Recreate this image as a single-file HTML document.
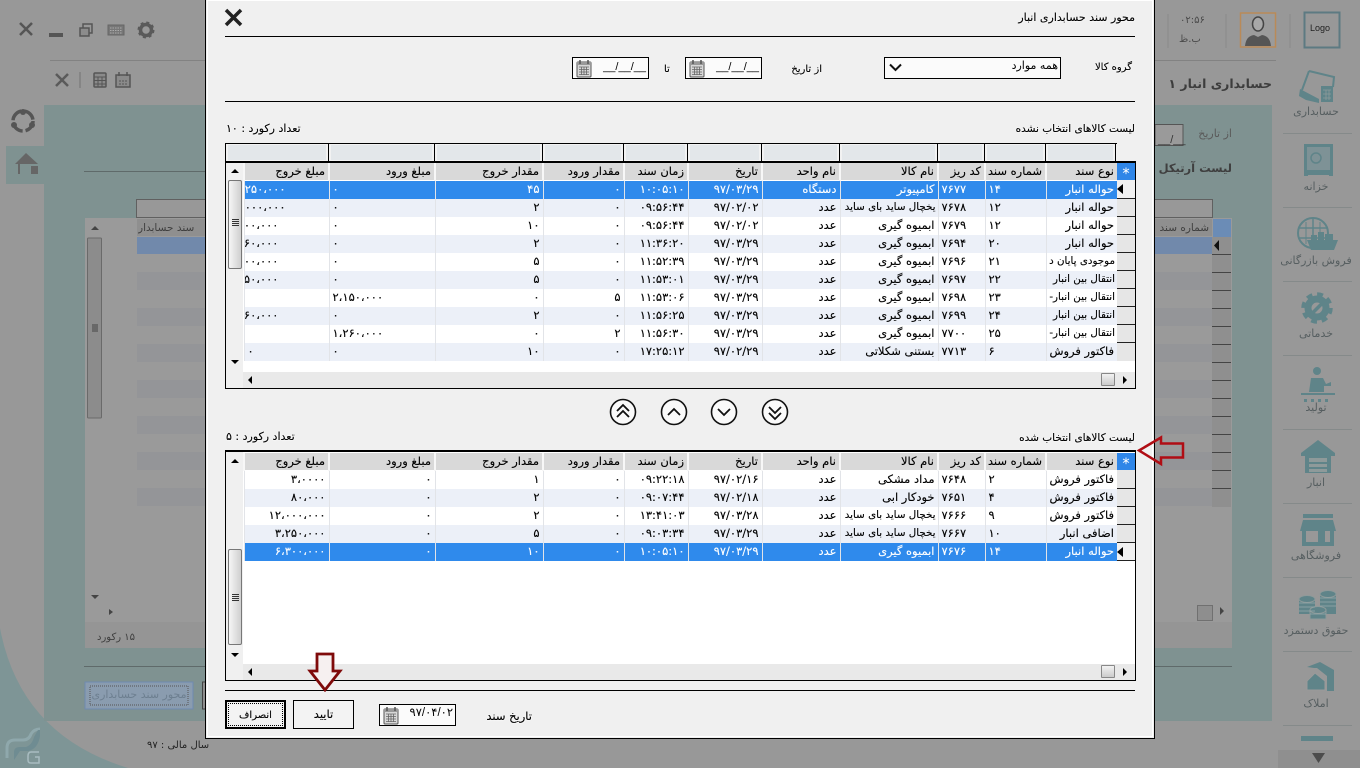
<!DOCTYPE html>
<html lang="fa">
<head>
<meta charset="utf-8">
<title>محور سند حسابداری انبار</title>
<style>
html,body{margin:0;padding:0;width:1360px;height:768px;overflow:hidden;background:#989898;}
body{position:relative;font-family:"DejaVu Sans","Liberation Sans",sans-serif;font-size:10px;color:#000;}
.a{position:absolute;box-sizing:border-box;}
.t{position:absolute;white-space:nowrap;direction:rtl;line-height:14px;}
.bgt{color:#3f3f3f;}
.side{color:#565e60;font-size:11px;width:88px;left:1272px;text-align:center;}
#dlg{left:205px;top:-2px;width:950px;height:741px;background:#f0f0f0;border:1.5px solid #000;outline:1px solid #fff;outline-offset:-3px;}
.hl{position:absolute;left:225px;width:910px;height:1px;background:#000;}
.lab{text-shadow:0 0 2px #fff,0 0 2px #fff;-webkit-text-stroke:.12px #000;}
.date{position:absolute;height:22px;width:77px;border:1px solid #000;background:#fbfbfb;box-sizing:border-box;}
.date svg{position:absolute;left:3px;top:1px;}
.mask{position:absolute;right:2px;top:3px;font:11px "Liberation Sans","DejaVu Sans",sans-serif;line-height:12px;}
.grid{position:absolute;left:225px;width:911px;background:#fff;border:1px solid #000;box-sizing:border-box;}
table{position:absolute;border-collapse:collapse;table-layout:fixed;direction:rtl;width:891px;}
td,th{padding:0 3px;overflow:hidden;white-space:nowrap;height:18px;line-height:16px;font-size:11.5px;font-weight:normal;text-align:right;box-sizing:border-box;border-left:1px solid #e2e4e8;-webkit-text-stroke:.12px currentColor;}
td{padding-bottom:2px;}
th{height:17px;background:#d9d9d9;border-left:2px solid #f7f7f7;border-bottom:1px solid #fff;}
th.st{background:#2f86e8;color:#fff;border:0;font-size:14px;line-height:12px;text-align:center;padding:5px 0 0;}
tr:nth-child(odd) td{background:#ecf0f8;}
tr.s td{background:#2f8aec;color:#fff;}
td.i,tr:nth-child(odd) td.i{background:#e6e6e6;border-left:0;border-bottom:1px solid #222;padding:0;text-align:left;}
tr.s td.i{background:#f0f0f0;}
td.l{text-align:left;direction:ltr;}
td.m{padding-right:43px;}
td.n{font-size:10.300px;padding-right:2px;}
.cur{display:inline-block;width:0;height:0;border:5px solid transparent;border-left:0;border-right:6px solid #000;margin-top:3px;margin-left:0;vertical-align:top;}
.flt{position:absolute;top:0;height:18px;background:#e3e7ea;border-left:1px solid #000;box-sizing:border-box;background-clip:content-box;padding:1px 2px 2px 2px;}
.thumb{position:absolute;left:2px;width:14px;border:1px solid #777;border-radius:2px;background:linear-gradient(90deg,#f6f6f6,#cfcfcf);box-sizing:border-box;}
.grip{position:absolute;left:3px;width:7px;height:1px;background:#333;box-shadow:0 2px 0 #333,0 4px 0 #333,0 6px 0 #333;}
.up,.dn,.lf,.rt{position:absolute;width:0;height:0;border:4px solid transparent;}
.up{border-top:0;border-bottom:4px solid #000;}
.dn{border-bottom:0;border-top:4px solid #000;}
.lf{border-left:0;border-right:4px solid #000;}
.rt{border-right:0;border-left:4px solid #000;}
.hsb{position:absolute;left:17px;height:16px;width:892px;background:#e9e9e9;}
.vsb{position:absolute;left:0;top:0;width:17px;background:#f0f0f0;}
.hth{position:absolute;left:858px;top:1px;width:14px;height:13px;border:1px solid #888;background:linear-gradient(#f2f2f2,#cbcbcb);box-sizing:border-box;border-radius:1px;}
.btn{position:absolute;top:700px;height:29px;width:61px;background:#f3f3f3;text-align:center;line-height:27px;box-sizing:border-box;direction:rtl;-webkit-text-stroke:.12px #000;}
</style>
</head>
<body>
<svg width="0" height="0" style="position:absolute"><defs>
<g id="cal"><rect x="1" y="3" width="14" height="15" rx="1" fill="#d8d8d8" stroke="#555"/><rect x="1" y="3" width="14" height="3" fill="#999"/><path d="M4 1v4M12 1v4" stroke="#555" stroke-width="1.5"/><path d="M3 8h10M3 10.500h10M3 13h10M3 15.500h10M5.500 8v8M8 8v8M10.500 8v8" stroke="#666" stroke-width=".8"/></g>
</defs></svg>

<!-- background -->
<svg class="a" style="left:0;top:0" width="1360" height="768">
<path d="M0 628Q20 735 128 768H0Z" fill="#7e9596"/>
<rect x="44" y="105" width="1228" height="616" fill="#7f9291"/>
<rect x="6" y="146" width="38" height="38" fill="#7f9291"/>
<rect x="50" y="60" width="1226" height="1" fill="#828282"/>
<rect x="84" y="171" width="122" height="1" fill="#5f6a6a"/>
<rect x="84" y="666" width="1148" height="1" fill="#5f6a6a"/>
<rect x="85" y="218" width="1147" height="404" fill="#9a9a9a"/>
<rect x="85" y="622" width="1147" height="26" fill="#959595"/>
<rect x="137" y="237" width="1076" height="17" fill="#7189ab"/>
<rect x="137" y="272" width="1076" height="18" fill="#949598"/><rect x="137" y="308" width="1076" height="18" fill="#949598"/><rect x="137" y="344" width="1076" height="18" fill="#949598"/><rect x="137" y="380" width="1076" height="18" fill="#949598"/><rect x="137" y="416" width="1076" height="18" fill="#949598"/><rect x="137" y="452" width="1076" height="18" fill="#949598"/><rect x="137" y="488" width="1076" height="18" fill="#949598"/>
<rect x="136.500" y="199.500" width="1076" height="18" fill="#989898" stroke="#606060"/>
<rect x="137" y="219" width="1075" height="17" fill="#8f8f8f"/>
<rect x="1213" y="219" width="18" height="18" fill="#6b8cb6"/>
<rect x="1212" y="237" width="19" height="270" fill="#8f8f8f"/>
<path d="M1212 254.500h19M1212 272.500h19M1212 290.500h19M1212 308.500h19M1212 326.500h19M1212 344.500h19M1212 362.500h19M1212 380.500h19M1212 398.500h19M1212 416.500h19M1212 434.500h19M1212 452.500h19M1212 470.500h19M1212 488.500h19" stroke="#444"/>
<path d="M1219 240v11l-5-5.500z" fill="#111"/>
<rect x="87.500" y="238" width="14" height="180" rx="1" fill="#8c8c8c" stroke="#6a6a6a"/>
<path d="M92 325h6M92 327h6M92 329h6M92 331h6" stroke="#444"/>
<path d="M91 230l4-4 4 4zM91 595l4 4 4-4zM113 612l-4-3v6zM1220 607l4 4-4 4z" fill="#444"/>
<rect x="1197.500" y="605.500" width="15" height="15" fill="#8e8e8e" stroke="#707070"/>
<rect x="1155" y="124.500" width="28" height="21" fill="#9a9a9a" stroke="#555"/>
<rect x="85" y="682" width="108" height="27" fill="#8a9caf" stroke="#6f8ab0"/>
<rect x="90" y="686" width="98" height="19" fill="none" stroke="#555" stroke-dasharray="1 1"/>
<rect x="202.500" y="682" width="4" height="27" fill="#8e8e8e" stroke="#444"/>
<path d="M1168 14v34M1226 14v34M1290 14v34" stroke="#8a8a8a"/>
<!-- window controls -->
<path d="M20 23L32 35M32 23L20 35" stroke="#555" stroke-width="2.500"/>
<rect x="49" y="33" width="14" height="4" fill="#555"/>
<path d="M83 24h9v9h-9z" fill="none" stroke="#555" stroke-width="1.500"/>
<path d="M80 28h9v8h-9z" fill="#8c8c8c" stroke="#555" stroke-width="1.500"/>
<rect x="108" y="25" width="16" height="10" fill="#777" stroke="#666"/>
<path d="M110 28h12M110 30.500h12M110 33h12" stroke="#aaa" stroke-dasharray="1.500 1"/>
<circle cx="146" cy="30" r="5.500" fill="none" stroke="#5a5a5a" stroke-width="3.500"/>
<circle cx="146" cy="30" r="7.500" fill="none" stroke="#5a5a5a" stroke-width="2" stroke-dasharray="3 2.900"/>
<path d="M56 74L68 86M68 74L56 86" stroke="#5a5a5a" stroke-width="2.500"/>
<rect x="79" y="72" width="2" height="16" fill="#858585"/>
<rect x="94" y="73" width="12" height="14" rx="1" fill="#8a8a8a" stroke="#555" stroke-width="1.500"/>
<path d="M94 77h12M94 80.500h12M94 84h12M98 77v10M102 77v10" stroke="#555"/>
<rect x="116" y="75" width="14" height="12" fill="#8a8a8a" stroke="#555" stroke-width="1.500"/>
<path d="M119 72v4M127 72v4" stroke="#555" stroke-width="1.500"/>
<path d="M119 81h2M122 81h2M125 81h2M119 84h2M122 84h2M125 84h2" stroke="#555"/>
<!-- left icons -->
<circle cx="23" cy="121" r="10" fill="none" stroke="#555" stroke-width="3.500" stroke-dasharray="13 3"/>
<circle cx="23" cy="112" r="3" fill="#555"/><circle cx="14" cy="125" r="3" fill="#555"/><circle cx="32" cy="125" r="3" fill="#555"/>
<path d="M15 164l11-11 12 11z" fill="#666"/><rect x="18" y="164" width="2" height="10" fill="#666"/><rect x="31" y="166" width="7" height="8" fill="#666"/>
<!-- logo -->
<rect x="1304.500" y="12.500" width="35" height="35" fill="none" stroke="#5d7a82" stroke-width="2"/>
<rect x="1240.500" y="13" width="35" height="34" fill="#9b9b9b" stroke="#b98a58" stroke-width="1.500"/>
<ellipse cx="1258" cy="24" rx="5.500" ry="7" fill="#a8a8a8" stroke="#444" stroke-width="1.500"/>
<path d="M1245 46q1-10 9-11l4 2 4-2q8 1 9 11z" fill="#555"/>
<!-- sidebar icons -->
<g fill="#5f8489">
<path d="M1309 71l25 6-1 10M1309 71l-7 19" fill="none" stroke="#5f8489" stroke-width="2"/>
<path d="M1300 89l19 10v4l-13-3-7-4z"/>
<rect x="1321" y="86" width="12" height="16"/>
<path d="M1323 90h8M1323 94h8M1323 98h8M1326 90v10M1329 90v10" stroke="#8e9a9a" stroke-width=".8"/>
<rect x="1304" y="144" width="29" height="29"/><rect x="1307" y="147" width="23" height="23" fill="#7e9296"/><path d="M1304 173h29v3h-4v-1h-21v1h-4z"/>
<circle cx="1316" cy="158" r="5" fill="none" stroke="#5f8489" stroke-width="1.500"/>
<circle cx="1313" cy="233" r="15" fill="none" stroke="#5f8489" stroke-width="2"/>
<path d="M1299 228h28M1299 238h28M1313 218v30" stroke="#5f8489" stroke-width="1.500"/>
<path d="M1306 222v22M1320 222v22" stroke="#5f8489"/>
<path d="M1307 240h31l-4 10h-23z"/><rect x="1311" y="235" width="6" height="6"/><rect x="1318" y="232" width="6" height="9"/><rect x="1325" y="234" width="8" height="7"/>
<circle cx="1317" cy="308" r="9" fill="none" stroke="#5f8489" stroke-width="7"/>
<circle cx="1317" cy="308" r="14" fill="none" stroke="#5f8489" stroke-width="3.500" stroke-dasharray="6 5"/>
<path d="M1312 311l8-8 3 2-9 9z"/>
<circle cx="1317" cy="371" r="4"/><path d="M1309 392l2-14h12l3 6 5-2v4h-7v6z"/><path d="M1301 393h34v2h-34z"/><path d="M1304 399h3v3h-3zM1311 399h3v3h-3zM1318 399h3v3h-3zM1325 399h3v3h-3z"/>
<path d="M1318 440l17 13v3h-34v-3z"/><rect x="1305" y="456" width="26" height="17"/>
<rect x="1309" y="458" width="18" height="4" fill="#8e9a9a"/><rect x="1309" y="464" width="18" height="3" fill="#8e9a9a"/><rect x="1309" y="469" width="18" height="3" fill="#8e9a9a"/>
<rect x="1303" y="514" width="30" height="4"/><path d="M1303 520h30l3 11h-36z"/><path d="M1302 531h4v15h-4zM1330 531h4v15h-4zM1306 542h24v4h-24z"/><rect x="1318" y="531" width="7" height="14"/>
<rect x="1299" y="599" width="16" height="15"/><rect x="1320" y="594" width="16" height="20"/><ellipse cx="1307" cy="599" rx="8" ry="3.500" stroke="#8e9a9a"/><ellipse cx="1328" cy="594" rx="8" ry="3.500" stroke="#8e9a9a"/>
<rect x="1310" y="610" width="16" height="9" stroke="#8e9a9a"/><ellipse cx="1318" cy="610" rx="8" ry="3.500" stroke="#8e9a9a"/>
<path d="M1320 662l14 8v21h-7v-15l-10-8h-3l-7-1z"/><path d="M1315 673l10 8v9h-18v-9z" stroke="#9a9a9a"/>
<rect x="1301" y="736" width="32" height="5"/>
</g>
<path d="M1299 603h16M1299 607h16M1299 611h16M1320 598h16M1320 602h16M1320 606h16M1310 614h16" stroke="#9aa" stroke-width=".8"/>
<path d="M1283 133.500h69M1283 207.500h69M1283 281.500h69M1283 355.500h69M1283 429.500h69M1283 503.500h69M1283 577.500h69M1283 651.500h69M1283 725.500h69" stroke="#858a8a"/>
<rect x="1278" y="750" width="82" height="18" fill="#8f8f8f"/>
<path d="M1312 753h13l-6.500 10z" fill="#4c4c4c"/>
<!-- G logo -->
<path d="M7 748q0-8 8-8h8q6 0 8-6 3-5 9-5M7 748v10" fill="none" stroke="#8fa8ac" stroke-width="3"/>
<path d="M14 760v-8q0-5 6-5h6q6-2 8-10l4-7h2v6q-2 13-12 15h-8" fill="#6f8c92"/>
<path d="M39 752H31q-3 0-3 4v4q0 3 3 3h8v-6h-4" fill="none" stroke="#a8bcc0" stroke-width="1.500"/>
</svg>

<div class="t bgt" style="right:88px;top:76px;font-size:12.5px;font-weight:bold;color:#3d3d3d;line-height:16px;">حسابداری انبار ۱</div>
<div class="t bgt" style="top:127px;font-size:11px;color:#5a5a5a;right:128px;">از تاریخ</div>
<div class="t" style="left:1158px;top:134px;font:11px 'Liberation Sans',sans-serif;color:#333;direction:ltr;">__/__</div>
<div class="t bgt" style="right:128px;top:160px;font-size:11.500px;font-weight:bold;line-height:16px;">لیست آرتیکل</div>
<div class="t bgt" style="right:151px;top:221px;font-size:10.500px;">شماره سند</div>
<div class="t bgt" style="left:138px;top:221px;width:66px;overflow:hidden;font-size:10.500px;text-align:left;">سند حسابدار</div>
<div class="t bgt" style="left:97px;top:631px;">۱۵ رکورد</div>
<div class="t" style="left:90px;top:687px;width:98px;text-align:center;color:#6d7f90;font-size:11px;line-height:16px;">محور سند حسابداری</div>
<div class="t bgt" style="left:147px;top:739px;color:#222;">سال مالی : ۹۷</div>
<div class="t" style="left:1310px;top:23px;font:9px 'Liberation Sans',sans-serif;color:#222;direction:ltr;">Logo</div>
<div class="t" style="left:1180px;top:14px;color:#4a4a4a;direction:ltr;">۰۲:۵۶</div>
<div class="t" style="left:1179px;top:33px;color:#4a4a4a;">ب.ظ</div>
<div class="t side" style="top:105px;">حسابداری</div>
<div class="t side" style="top:180px;">خزانه</div>
<div class="t side" style="top:254px;">فروش بازرگانی</div>
<div class="t side" style="top:327px;">خدماتی</div>
<div class="t side" style="top:401px;">تولید</div>
<div class="t side" style="top:476px;">انبار</div>
<div class="t side" style="top:549px;">فروشگاهی</div>
<div class="t side" style="top:624px;">حقوق دستمزد</div>
<div class="t side" style="top:697px;">املاک</div>

<!-- dialog -->
<div class="a" id="dlg"></div>
<svg class="a" style="left:224px;top:8px" width="20" height="20"><path d="M2 2L17 17M17 2L2 17" stroke="#222" stroke-width="3.500"/></svg>
<div class="t lab" style="right:225px;top:11px;font-size:11px;">محور سند حسابداری انبار</div>
<div class="hl" style="top:36px"></div>
<div class="t lab" style="right:228px;top:61px;">گروه کالا</div>
<div class="a" style="left:884px;top:57px;width:177px;height:22px;border:1px solid #000;background:#fbfbfb;"></div>
<svg class="a" style="left:888px;top:62px" width="16" height="12"><path d="M2 2.500L7.500 8 13 2.500" fill="none" stroke="#111" stroke-width="2"/></svg>
<div class="t" style="right:302px;top:59px;font-size:11px;">همه موارد</div>
<div class="t lab" style="right:538px;top:63px;">از تاریخ</div>
<div class="date" style="left:685px;top:57px;"><svg width="18" height="19"><use href="#cal"/></svg><span class="mask">__/__/__</span></div>
<div class="t lab" style="left:664px;top:63px;">تا</div>
<div class="date" style="left:572px;top:57px;"><svg width="18" height="19"><use href="#cal"/></svg><span class="mask">__/__/__</span></div>
<div class="hl" style="top:101px"></div>
<div class="t lab" style="right:225px;top:122px;font-size:10.500px;">لیست کالاهای انتخاب نشده</div>
<div class="t lab" style="left:226px;top:122px;font-size:11px;">تعداد رکورد : ۱۰</div>

<!-- top grid -->
<div class="grid" style="top:143px;height:246px;">
 <div class="a" style="left:0;top:0;width:909px;border-bottom:2px solid #000;background:#f2f2f2;box-sizing:content-box;height:17px;">
  <div class="flt" style="left:0;width:102px;border-left:0"></div>
  <div class="flt" style="left:102px;width:106px"></div>
  <div class="flt" style="left:208px;width:108px"></div>
  <div class="flt" style="left:316px;width:81px"></div>
  <div class="flt" style="left:397px;width:64px"></div>
  <div class="flt" style="left:461px;width:74px"></div>
  <div class="flt" style="left:535px;width:78px"></div>
  <div class="flt" style="left:613px;width:98px"></div>
  <div class="flt" style="left:711px;width:47px"></div>
  <div class="flt" style="left:758px;width:61px"></div>
  <div class="flt" style="left:819px;width:71px;border-right:1px solid #000"></div>
 </div>
 <div class="vsb" style="top:19px;height:209px;"><div class="up" style="left:5px;top:6px"></div>
  <div class="thumb" style="top:17px;height:89px;"><div class="grip" style="top:38px"></div></div>
  <div class="dn" style="left:5px;top:197px"></div></div>
 <table style="left:17px;top:19px;">
 <colgroup><col style="width:18px"><col style="width:71px"><col style="width:61px"><col style="width:47px"><col style="width:98px"><col style="width:78px"><col style="width:74px"><col style="width:64px"><col style="width:81px"><col style="width:108px"><col style="width:106px"><col style="width:85px"></colgroup>
 <tr><th class="st">*</th><th>نوع سند</th><th>شماره سند</th><th>کد ریز</th><th>نام کالا</th><th>نام واحد</th><th>تاریخ</th><th>زمان سند</th><th>مقدار ورود</th><th>مقدار خروج</th><th>مبلغ ورود</th><th>مبلغ خروج</th></tr>
 <tr class="s"><td class="i"><span class="cur"></span></td><td>حواله انبار</td><td class="l">۱۴</td><td class="l">۷۶۷۷</td><td>کامپیوتر</td><td>دستگاه</td><td>۹۷/۰۳/۲۹</td><td>۱۰:۰۵:۱۰</td><td>۰</td><td>۴۵</td><td class="l">۰</td><td class="m">۱۱،۲۵۰،۰۰۰</td></tr>
 <tr><td class="i"></td><td>حواله انبار</td><td class="l">۱۲</td><td class="l">۷۶۷۸</td><td class="n">یخچال ساید بای ساید</td><td>عدد</td><td>۹۷/۰۲/۰۲</td><td>۰۹:۵۶:۴۴</td><td>۰</td><td>۲</td><td class="l">۰</td><td class="m">۱۰،۰۰۰،۰۰۰</td></tr>
 <tr><td class="i"></td><td>حواله انبار</td><td class="l">۱۲</td><td class="l">۷۶۷۹</td><td>ابمیوه گیری</td><td>عدد</td><td>۹۷/۰۲/۰۲</td><td>۰۹:۵۶:۴۴</td><td>۰</td><td>۱۰</td><td class="l">۰</td><td class="m" style="padding-right:50px">۱،۰۰۰،۰۰۰</td></tr>
 <tr><td class="i"></td><td>حواله انبار</td><td class="l">۲۰</td><td class="l">۷۶۹۴</td><td>ابمیوه گیری</td><td>عدد</td><td>۹۷/۰۳/۲۹</td><td>۱۱:۳۶:۲۰</td><td>۰</td><td>۲</td><td class="l">۰</td><td class="m" style="padding-right:50px">۱،۲۶۰،۰۰۰</td></tr>
 <tr><td class="i"></td><td class="n">موجودی پایان د</td><td class="l">۲۱</td><td class="l">۷۶۹۶</td><td>ابمیوه گیری</td><td>عدد</td><td>۹۷/۰۳/۲۹</td><td>۱۱:۵۲:۳۹</td><td>۰</td><td>۵</td><td class="l">۰</td><td class="m" style="padding-right:50px">۱،۱۰۰،۰۰۰</td></tr>
 <tr><td class="i"></td><td class="n">انتقال بین انبار</td><td class="l">۲۲</td><td class="l">۷۶۹۷</td><td>ابمیوه گیری</td><td>عدد</td><td>۹۷/۰۳/۲۹</td><td>۱۱:۵۳:۰۱</td><td>۰</td><td>۵</td><td class="l">۰</td><td class="m" style="padding-right:50px">۵۰،۰۰۰</td></tr>
 <tr><td class="i"></td><td class="n">انتقال بین انبار-</td><td class="l">۲۳</td><td class="l">۷۶۹۸</td><td>ابمیوه گیری</td><td>عدد</td><td>۹۷/۰۳/۲۹</td><td>۱۱:۵۳:۰۶</td><td>۵</td><td>۰</td><td class="l">۲،۱۵۰،۰۰۰</td><td></td></tr>
 <tr><td class="i"></td><td class="n">انتقال بین انبار</td><td class="l">۲۴</td><td class="l">۷۶۹۹</td><td>ابمیوه گیری</td><td>عدد</td><td>۹۷/۰۳/۲۹</td><td>۱۱:۵۶:۲۵</td><td>۰</td><td>۲</td><td class="l">۰</td><td class="m" style="padding-right:50px">۱،۲۶۰،۰۰۰</td></tr>
 <tr><td class="i"></td><td class="n">انتقال بین انبار-</td><td class="l">۲۵</td><td class="l">۷۷۰۰</td><td>ابمیوه گیری</td><td>عدد</td><td>۹۷/۰۳/۲۹</td><td>۱۱:۵۶:۳۰</td><td>۲</td><td>۰</td><td class="l">۱،۲۶۰،۰۰۰</td><td></td></tr>
 <tr><td class="i" style="border-bottom:0"></td><td>فاکتور فروش</td><td class="l">۶</td><td class="l">۷۷۱۳</td><td>بستنی شکلاتی</td><td>عدد</td><td>۹۷/۰۲/۲۹</td><td>۱۷:۲۵:۱۲</td><td>۰</td><td>۱۰</td><td class="l">۰</td><td class="l">۰</td></tr>
 </table>
 <div class="a" style="left:0;top:228px;width:17px;height:16px;background:#f0f0f0"></div>
 <div class="hsb" style="top:228px;"><div class="lf" style="left:5px;top:4px"></div><div class="hth"></div><div class="rt" style="left:880px;top:4px"></div></div>
</div>
<div class="a" style="left:1117px;top:142px;width:20px;height:19px;background:#f0f0f0;"></div>

<!-- arrows -->
<svg class="a" style="left:608px;top:397px" width="182" height="30">
<g fill="#fafafa" stroke="#111" stroke-width="1.600"><circle cx="15" cy="15" r="12.500"/><circle cx="66" cy="15" r="12.500"/><circle cx="116" cy="15" r="12.500"/><circle cx="167" cy="15" r="12.500"/></g>
<g fill="none" stroke="#111" stroke-width="1.800"><path d="M9 14l6-6 6 6M9 20l6-6 6 6M60 18l6-6 6 6M110 12l6 6 6-6M161 10l6 6 6-6M161 16l6 6 6-6"/></g>
</svg>
<div class="t lab" style="right:225px;top:431px;font-size:10.500px;">لیست کالاهای انتخاب شده</div>
<div class="t lab" style="left:226px;top:430px;font-size:11px;">تعداد رکورد : ۵</div>

<!-- bottom grid -->
<div class="grid" style="top:450px;height:231px;border-top:2px solid #000;">
 <div class="vsb" style="top:0;height:213px;"><div class="up" style="left:5px;top:7px"></div>
  <div class="thumb" style="top:97px;height:96px;"><div class="grip" style="top:44px"></div></div>
  <div class="dn" style="left:5px;top:201px"></div></div>
 <table style="left:17px;top:1px;">
 <colgroup><col style="width:18px"><col style="width:71px"><col style="width:61px"><col style="width:47px"><col style="width:98px"><col style="width:78px"><col style="width:74px"><col style="width:64px"><col style="width:81px"><col style="width:108px"><col style="width:106px"><col style="width:85px"></colgroup>
 <tr><th class="st">*</th><th>نوع سند</th><th>شماره سند</th><th>کد ریز</th><th>نام کالا</th><th>نام واحد</th><th>تاریخ</th><th>زمان سند</th><th>مقدار ورود</th><th>مقدار خروج</th><th>مبلغ ورود</th><th>مبلغ خروج</th></tr>
 <tr><td class="i"></td><td>فاکتور فروش</td><td class="l">۲</td><td class="l">۷۶۴۸</td><td>مداد مشکی&nbsp;&nbsp;</td><td>عدد</td><td>۹۷/۰۲/۱۶</td><td>۰۹:۲۲:۱۸</td><td>۰</td><td>۱</td><td>۰</td><td>۳،۰۰۰۰</td></tr>
 <tr><td class="i"></td><td>فاکتور فروش</td><td class="l">۴</td><td class="l">۷۶۵۱</td><td>خودکار ابی</td><td>عدد</td><td>۹۷/۰۲/۱۸</td><td>۰۹:۰۷:۴۴</td><td>۰</td><td>۲</td><td>۰</td><td>۸۰،۰۰۰</td></tr>
 <tr><td class="i"></td><td>فاکتور فروش</td><td class="l">۹</td><td class="l">۷۶۶۶</td><td class="n">یخچال ساید بای ساید</td><td>عدد</td><td>۹۷/۰۳/۲۸</td><td>۱۳:۴۱:۰۳</td><td>۰</td><td>۲</td><td>۰</td><td>۱۲،۰۰۰،۰۰۰</td></tr>
 <tr><td class="i"></td><td>اضافی انبار</td><td class="l">۱۰</td><td class="l">۷۶۶۷</td><td class="n">یخچال ساید بای ساید</td><td>عدد</td><td>۹۷/۰۳/۲۹</td><td>۰۹:۰۳:۳۴</td><td>۰</td><td>۵</td><td>۰</td><td>۳،۲۵۰،۰۰۰</td></tr>
 <tr class="s"><td class="i"><span class="cur"></span></td><td>حواله انبار</td><td class="l">۱۴</td><td class="l">۷۶۷۶</td><td>ابمیوه گیری</td><td>عدد</td><td>۹۷/۰۳/۲۹</td><td>۱۰:۰۵:۱۰</td><td>۰</td><td>۱۰</td><td>۰</td><td>۶،۳۰۰،۰۰۰</td></tr>
 </table>
 <div class="a" style="left:0;top:212px;width:17px;height:16px;background:#f0f0f0"></div>
 <div class="hsb" style="top:212px;"><div class="lf" style="left:5px;top:4px"></div><div class="hth"></div><div class="rt" style="left:880px;top:4px"></div></div>
</div>

<div class="hl" style="top:690px"></div>
<div class="btn" style="left:225px;border:2px solid #000;"><div class="a" style="left:1px;top:1px;right:1px;bottom:1px;border:1px dotted #000;"></div>انصراف</div>
<div class="btn" style="left:293px;border:1px solid #000;font-size:11.500px;">تایید</div>
<div class="date" style="left:379px;top:704px;"><svg width="18" height="19"><use href="#cal"/></svg><span class="mask" style="top:2px;font-size:11.500px;">۹۷/۰۴/۰۲</span></div>
<div class="t lab" style="right:828px;top:709px;font-size:11.500px;">تاریخ سند</div>

<!-- red annotation arrows -->
<svg class="a" style="left:1136px;top:434px" width="52" height="34"><path d="M3 16.500L25 3.500v6h22v14H25v6.500z" fill="none" stroke="#b00d14" stroke-width="2.500"/></svg>
<svg class="a" style="left:306px;top:650px" width="40" height="42"><path d="M11 4H27V21H34L19 40 4 21H11z" fill="#f6f0f0" stroke="#7f0a0a" stroke-width="2.800"/></svg>
</body>
</html>
